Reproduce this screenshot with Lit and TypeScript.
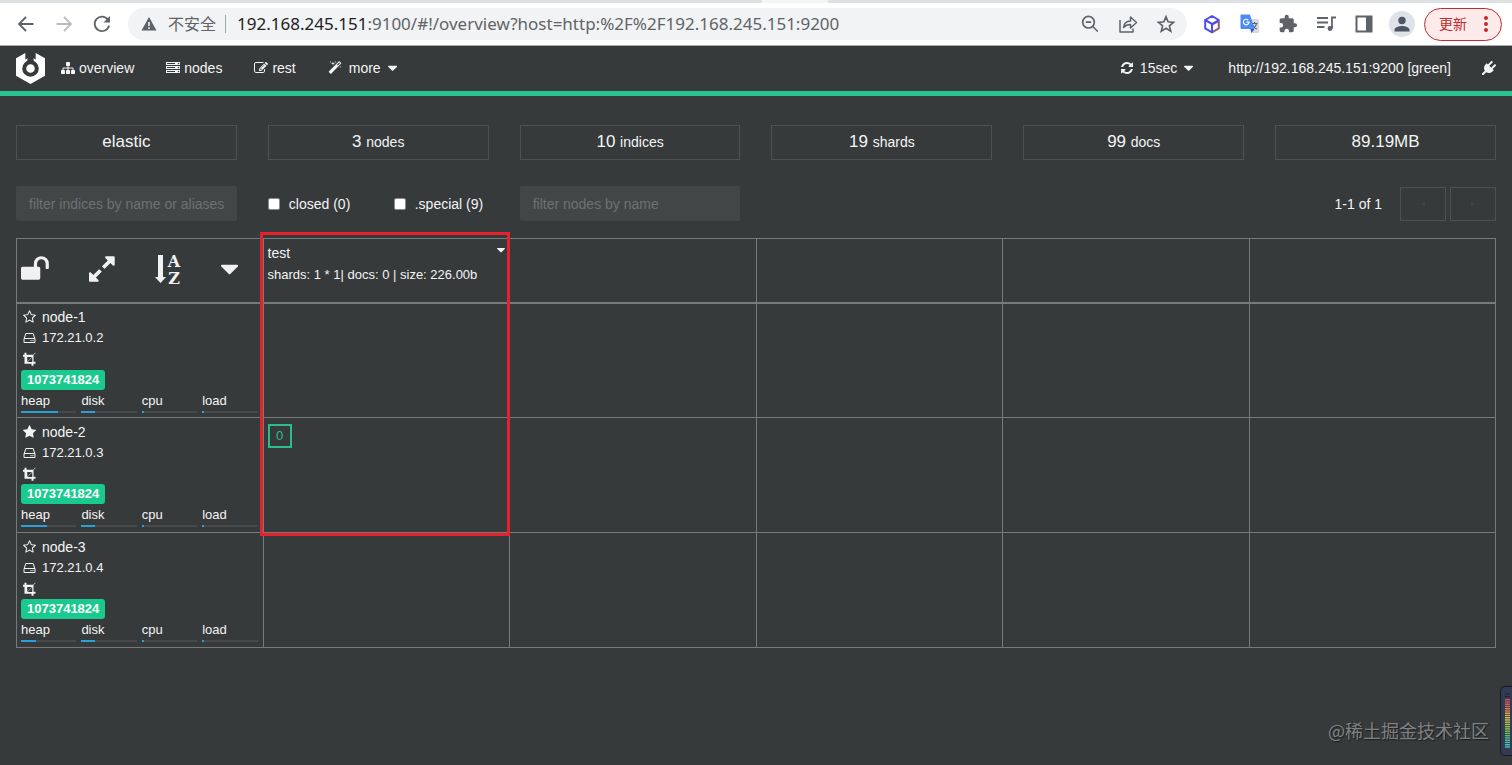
import { LitElement, html, css, svg, nothing } from "lit";
import { customElement, property } from "lit/decorators.js";

interface Glyph {
  box: string;
  d: string;
}

const GLYPHS: Record<string, Glyph> = {
  caret: {
    box: "384 0 1024 1792",
    d: "M1408 704q0 26-19 45l-448 448q-19 19-45 19t-45-19l-448-448q-19-19-19-45t19-45 45-19h896q26 0 45 19t19 45z",
  },
  star: {
    box: "64 0 1664 1792",
    d: "M1728 647q0 22-26 48l-363 354 86 500q1 7 1 20 0 21-10.5 35.5t-30.5 14.5q-19 0-40-12l-449-236-449 236q-22 12-40 12-21 0-31.5-14.5t-10.5-35.5q0-6 2-20l86-500-364-354q-25-27-25-48 0-37 56-46l502-73 225-455q19-41 49-41t49 41l225 455 502 73q56 9 56 46z",
  },
  starOutline: {
    box: "64 0 1664 1792",
    d: "M1201 1004l306-297-422-62-189-382-189 382-422 62 306 297-73 421 378-199 377 199zm527-357q0 22-26 48l-363 354 86 500q1 7 1 20 0 50-41 50-19 0-40-12l-449-236-449 236q-22 12-40 12-21 0-31.5-14.5t-10.5-35.5q0-6 2-20l86-500-364-354q-25-27-25-48 0-37 56-46l502-73 225-455q19-41 49-41t49 41l225 455 502 73q56 9 56 46z",
  },
  sitemap: {
    box: "0 0 1792 1792",
    d: "M1792 1248v320q0 40-28 68t-68 28h-320q-40 0-68-28t-28-68v-320q0-40 28-68t68-28h96v-192h-512v192h96q40 0 68 28t28 68v320q0 40-28 68t-68 28h-320q-40 0-68-28t-28-68v-320q0-40 28-68t68-28h96v-192h-512v192h96q40 0 68 28t28 68v320q0 40-28 68t-68 28h-320q-40 0-68-28t-28-68v-320q0-40 28-68t68-28h96v-192q0-52 38-90t90-38h512v-192h-96q-40 0-68-28t-28-68v-320q0-40 28-68t68-28h320q40 0 68 28t28 68v320q0 40-28 68t-68 28h-96v192h512q52 0 90 38t38 90v192h96q40 0 68 28t28 68z",
  },
  server: {
    box: "0 0 1792 1792",
    d: "M128 1408h1024v-128h-1024v128zm0-512h1024v-128h-1024v128zm1568 448q0-40-28-68t-68-28-68 28-28 68 28 68 68 28 68-28 28-68zm-1568-960h1024v-128h-1024v128zm1568 448q0-40-28-68t-68-28-68 28-28 68 28 68 68 28 68-28 28-68zm0-512q0-40-28-68t-68-28-68 28-28 68 28 68 68 28 68-28 28-68zm96 832v384h-1792v-384h1792zm0-512v384h-1792v-384h1792zm0-512v384h-1792v-384h1792z",
  },
  edit: {
    box: "0 0 1792 1792",
    d: "M888 1184l116-116-152-152-116 116v56h96v96h56zm440-720q-16-16-33 1l-350 350q-17 17-1 33t33-1l350-350q17-17 1-33zm80 594v190q0 119-84.5 203.5t-203.5 84.5h-832q-119 0-203.5-84.5t-84.5-203.5v-832q0-119 84.5-203.5t203.5-84.5h832q63 0 117 25 15 7 18 23 3 17-9 29l-49 49q-14 14-32 8-23-6-45-6h-832q-66 0-113 47t-47 113v832q0 66 47 113t113 47h832q66 0 113-47t47-113v-126q0-13 9-22l64-64q15-15 35-7t20 29zm-96-738l288 288-672 672h-288v-288zm444 132l-92 92-288-288 92-92q28-28 68-28t68 28l152 152q28 28 28 68t-28 68z",
  },
  magic: {
    box: "0 0 1792 1792",
    d: "M1254 581l293-293-107-107-293 293zm447-293q0 27-18 45l-1286 1286q-18 18-45 18t-45-18l-198-198q-18-18-18-45t18-45l1286-1286q18-18 45-18t45 18l198 198q18 18 18 45zm-1351-190l98 30-98 30-30 98-30-98-98-30 98-30 30-98zm350 162l196 60-196 60-60 196-60-196-196-60 196-60 60-196zm930 478l98 30-98 30-30 98-30-98-98-30 98-30 30-98zm-640-640l98 30-98 30-30 98-30-98-98-30 98-30 30-98z",
  },
  refresh: {
    box: "128 0 1536 1792",
    d: "M1639 1056q0 5-1 7-64 268-268 434.5t-478 166.5q-146 0-282.5-55t-243.5-157l-129 129q-19 19-45 19t-45-19-19-45v-448q0-26 19-45t45-19h448q26 0 45 19t19 45-19 45l-137 137q71 66 161 102t187 36q134 0 250-65t186-179q11-17 53-117 8-23 30-23h192q13 0 22.5 9.5t9.5 22.5zm25-800v448q0 26-19 45t-45 19h-448q-26 0-45-19t-19-45 19-45l138-138q-148-137-349-137-134 0-250 65t-186 179q-11 17-53 117-8 23-30 23h-199q-13 0-22.5-9.5t-9.5-22.5v-7q65-268 270-434.5t480-166.5q146 0 284 55.5t245 156.5l130-129q19-19 45-19t45 19 19 45z",
  },
  plug: {
    box: "0 0 1792 1792",
    d: "M1755 453q37 38 37 90.5t-37 90.5l-401 400 150 150-160 160q-163 163-389.5 186.5t-411.5-100.5l-362 362h-181v-181l362-362q-124-185-100.5-411.5t186.5-389.5l160-160 150 150 400-401q38-37 91-37t90 37 37 90.5-37 90.5l-400 401 234 234 401-400q38-37 91-37t90 37z",
  },
  unlock: {
    box: "64 0 1664 1792",
    d: "M1728 576v256q0 26-19 45t-45 19h-64q-26 0-45-19t-19-45v-256q0-106-75-181t-181-75-181 75-75 181v192h96q40 0 68 28t28 68v576q0 40-28 68t-68 28h-960q-40 0-68-28t-28-68v-576q0-40 28-68t68-28h672v-192q0-185 131.5-316.5t316.5-131.5 316.5 131.5 131.5 316.5z",
  },
  expand: {
    box: "128 0 1536 1792",
    d: "M883 1056q0 13-10 23l-332 332 144 144q19 19 19 45t-19 45-45 19h-448q-26 0-45-19t-19-45v-448q0-26 19-45t45-19 45 19l144 144 332-332q10-10 23-10t23 10l114 114q10 10 10 23zm781-864v448q0 26-19 45t-45 19-45-19l-144-144-332 332q-10 10-23 10t-23-10l-114-114q-10-10-10-23t10-23l332-332-144-144q-19-19-19-45t19-45 45-19h448q26 0 45 19t19 45z",
  },
  disk: {
    box: "64 0 1664 1792",
    d: "M1168 1216q0 33-23.5 56.5t-56.5 23.5-56.5-23.5-23.5-56.5 23.5-56.5 56.5-23.5 56.5 23.5 23.5 56.5zm256 0q0 33-23.5 56.5t-56.5 23.5-56.5-23.5-23.5-56.5 23.5-56.5 56.5-23.5 56.5 23.5 23.5 56.5zm112 160v-320q0-13-9.5-22.5t-22.5-9.5h-1216q-13 0-22.5 9.5t-9.5 22.5v320q0 13 9.5 22.5t22.5 9.5h1216q13 0 22.5-9.5t9.5-22.5zm-1230-480h1180l-157-482q-4-13-16-21.5t-26-8.5h-782q-14 0-26 8.5t-16 21.5zm1358 160v320q0 66-47 113t-113 47h-1216q-66 0-113-47t-47-113v-320q0-25 16-75l197-606q17-53 63-86t101-33h782q55 0 101 33t63 86l197 606q16 50 16 75z",
  },
  crop: {
    box: "64 0 1664 1792",
    d: "M646 1280h602v-602zm-38-38l602-602h-602v602zm1056 38v192q0 14-9 23t-23 9h-224v224q0 14-9 23t-23 9h-192q-14 0-23-9t-9-23v-224h-864q-14 0-23-9t-9-23v-864h-224q-14 0-23-9t-9-23v-192q0-14 9-23t23-9h224v-224q0-14 9-23t23-9h192q14 0 23 9t9 23v224h851l246-247q10-9 23-9t23 9q9 10 9 23t-9 23l-247 246v851h224q14 0 23 9t9 23z",
  },
};

const glyph = (name: string, size = "g14") => html`
  <svg class=${size} viewBox=${GLYPHS[name].box} fill="currentColor" aria-hidden="true">
    <path d=${GLYPHS[name].d} />
  </svg>
`;

const glyphSizes = css`
  svg { display: block; flex: none; }
  .g14 { height: 14px; }
  .g16 { height: 16px; }
  .g30 { height: 30px; }
`;

const reset = css`
  *, *::before, *::after { box-sizing: border-box; }
  button, input { font: inherit; color: inherit; margin: 0; }
  button { display: flex; align-items: center; padding: 0; border: 0; background: none; cursor: pointer; }
  a { color: inherit; text-decoration: none; }
`;

@customElement("browser-bar")
export class BrowserBar extends LitElement {
  static styles = [
    reset,
    css`
      :host {
        display: block;
        height: 46px;
        border-bottom: 1px solid #a9abac;
        background: #fff;
        color: #5f6368;
        font-family: "Open Sans", "Noto Sans CJK SC", sans-serif;
      }
      svg { display: block; flex: none; }
      .tabs { display: flex; justify-content: center; height: 3px; padding-left: 78px; background: #dee1e3; }
      .tab { width: 66px; background: #f4f5f6; }
      .bar { display: flex; align-items: center; height: 42px; padding: 0 10px 0 14px; }
      .nav { display: flex; gap: 14px; padding-right: 14px; }
      .omni {
        display: flex;
        flex: 1;
        align-items: center;
        height: 32px;
        padding: 0 9px 0 12px;
        border-radius: 16px;
        background: #f1f3f4;
        font-size: 16px;
      }
      .warn { padding-left: 10px; white-space: nowrap; }
      .sep { width: 1px; height: 18px; margin: 0 11px 0 9px; background: #a4a8ab; }
      .url { flex: 1; font-family: "Noto Sans", sans-serif; font-size: 17px; white-space: nowrap; }
      .host { color: #202124; }
      .inner { display: flex; gap: 14px; }
      .tools { display: flex; align-items: center; gap: 14px; padding-left: 13px; }
      .avatar { overflow: visible; }
      .update {
        gap: 12px;
        height: 33px;
        margin-left: 10px;
        padding: 0 8px 0 14px;
        border: 1px solid #c5292a;
        border-radius: 17px;
        background: #fcebea;
        color: #c5292a;
        font-size: 14px;
      }
    `,
  ];

  render() {
    return html`
      <div class="tabs"><div class="tab"></div></div>
      <div class="bar">
        <div class="nav">
          <button aria-label="Back">
            <svg width="24" height="24" viewBox="0 0 24 24" fill="none" stroke="#5f6368" stroke-width="1.8"><path d="M19.500 12H5M12 5l-7 7 7 7" /></svg>
          </button>
          <button aria-label="Forward">
            <svg width="24" height="24" viewBox="0 0 24 24" fill="none" stroke="#babcbe" stroke-width="1.800"><path d="M4.500 12H19M12 5l7 7-7 7" /></svg>
          </button>
          <button aria-label="Reload">
            <svg width="24" height="24" viewBox="0 0 24 24" fill="none" stroke="#5f6368" stroke-width="1.800">
              <path d="M18.200 8A7.300 7.300 0 1 0 19.100 13.500" />
              <path d="M20 4v6.500h-6.500z" fill="#5f6368" stroke="none" />
            </svg>
          </button>
        </div>
        <div class="omni">
          <svg width="18" height="18" viewBox="0 0 18 18"><path d="M9 2l7.500 13.500h-15z" fill="#5f6368" /><path d="M8.200 7h1.600v4H8.200zM8.200 12.300h1.600v1.600H8.200z" fill="#f1f3f4" /></svg>
          <span class="warn">不安全</span>
          <span class="sep"></span>
          <span class="url"><span class="host">192.168.245.151</span>:9100/#!/overview?host=http:%2F%2F192.168.245.151:9200</span>
          <div class="inner">
            <button aria-label="Zoom">
              <svg width="24" height="24" viewBox="0 0 24 24" fill="none" stroke="#5f6368" stroke-width="1.700"><circle cx="10.500" cy="10.200" r="5.800" /><path d="M14.800 14.500l5 5M7.800 10.200h5.400" /></svg>
            </button>
            <button aria-label="Share">
              <svg width="24" height="24" viewBox="0 0 24 24" fill="none" stroke="#5f6368" stroke-width="1.500" stroke-linejoin="round"><path d="M4 8v12h13v-3.500" /><path d="M7.500 15.500c.5-4.500 3-6.300 7-6.500V5l6 5.500-6 5.500v-3.500c-3 0-5 .8-7 3z" /></svg>
            </button>
            <button aria-label="Bookmark">
              <svg width="24" height="24" viewBox="0 0 24 24" fill="none" stroke="#5f6368" stroke-width="1.700"><path d="M12 4.800l2.100 5 5.400.5-4.100 3.500 1.300 5.300-4.700-2.900-4.700 2.900 1.300-5.300-4.100-3.500 5.400-.5z" /></svg>
            </button>
          </div>
        </div>
        <div class="tools">
          <button aria-label="Cube extension">
            <svg width="24" height="24" viewBox="0 0 24 24" fill="none" stroke-width="2" stroke-linejoin="round">
              <path d="M12 12.500v7.800l6.800-3.900V9.200z" stroke="#8c6468" />
              <path d="M12 12v8.300l-6.800-3.900V8z" stroke="#4a4df0" />
              <path d="M5.200 8L12 4l6.800 4L12 12z" stroke="#4a4df0" />
            </svg>
          </button>
          <button aria-label="Translate">
            <svg width="24" height="24" viewBox="0 0 24 24">
              <path d="M10 7h10a1 1 0 0 1 1 1v12a1 1 0 0 1-1 1h-7z" fill="#d6dade" />
              <path d="M13.500 11.500h6M16.500 10v1.500M18.500 11.500c-.5 2.500-2 4.500-4 5.500M14.800 13c.6 1.600 2 3.200 4 4" fill="none" stroke="#5f6368" stroke-width="1.100" />
              <path d="M3.500 2.500h8.500l4.500 14.500h-13a1 1 0 0 1-1-1v-12.500a1 1 0 0 1 1-1z" fill="#4c8bf5" />
              <path d="M12.500 17h4l-3 4z" fill="#2a56c6" />
              <path d="M10.300 8.200A2.800 2.800 0 1 0 11 10.200H8.400" fill="none" stroke="#fff" stroke-width="1.200" />
            </svg>
          </button>
          <button aria-label="Extensions">
            <svg width="24" height="24" viewBox="0 0 24 24" fill="#5f6368"><path transform="translate(2 2) scale(.83)" d="M20.500 11H19V7c0-1.100-.9-2-2-2h-4V3.500a2.500 2.500 0 0 0-5 0V5H4c-1.100 0-2 .9-2 2v3.800h1.500a2.700 2.700 0 0 1 0 5.400H2V20c0 1.100.9 2 2 2h3.800v-1.500a2.700 2.700 0 0 1 5.400 0V22H17c1.100 0 2-.9 2-2v-4h1.500a2.500 2.500 0 0 0 0-5z" /></svg>
          </button>
          <button aria-label="Media">
            <svg width="24" height="24" viewBox="0 0 24 24" fill="none" stroke="#5f6368" stroke-width="1.800"><path d="M3 6h11M3 10.500h11M3 15h7.500M22 5.500h-4v11" /><circle cx="16" cy="16.500" r="2.100" fill="#5f6368" stroke="none" /><circle cx="16" cy="16.500" r="1.500" /></svg>
          </button>
          <button aria-label="Side panel">
            <svg width="24" height="24" viewBox="0 0 24 24"><path d="M4.500 4.500h15v15h-15z" fill="none" stroke="#5f6368" stroke-width="2" /><path d="M14 4h6v16h-6z" fill="#5f6368" /></svg>
          </button>
          <button aria-label="Profile">
            <svg class="avatar" width="24" height="24" viewBox="1 1 24 24"><circle cx="13" cy="13" r="13" fill="#dfe2e8" /><circle cx="13" cy="9.500" r="3.700" fill="#4d5563" /><path d="M5.500 20.500v-1.500c0-2.700 4.500-4 7.500-4s7.500 1.300 7.500 4v1.500z" fill="#4d5563" /></svg>
          </button>
        </div>
        <button class="update">
          更新
          <svg width="14" height="16" viewBox="0 0 14 16" fill="#c5292a"><circle cx="7" cy="2" r="2" /><circle cx="7" cy="8" r="2" /><circle cx="7" cy="14" r="2" /></svg>
        </button>
      </div>
    `;
  }
}

@customElement("cluster-nav")
export class ClusterNav extends LitElement {
  static styles = [
    reset,
    glyphSizes,
    css`
      :host { display: block; border-bottom: 5px solid #28c48f; }
      nav { display: flex; align-items: center; height: 45px; padding: 0 16px 2px 15px; }
      .logo { margin-right: 15px; }
      .links { display: flex; flex: 1; gap: 32px; }
      .item { display: flex; align-items: center; gap: 4px; }
      .wide { gap: 7px; }
      .right { display: flex; align-items: center; }
      .address { margin: 0 31px 0 35px; }
    `,
  ];

  render() {
    return html`
      <nav>
        <a class="logo" href="#overview" aria-label="Home">
          <svg width="31" height="32" viewBox="0 0 31 32">
            <path d="M10.300 1v6.500L13 6h5l2.700 1.500V1L30 6.200v17.600L15.500 32 1 23.800V6.200z" fill="#fff" />
            <path d="M12.400 0h6.200v9h-6.200z" fill="#363a3b" />
            <circle cx="15.500" cy="16.500" r="6.300" fill="#fff" stroke="#363a3b" stroke-width="4" />
          </svg>
        </a>
        <div class="links">
          <a class="item" href="#overview">${glyph("sitemap")}overview</a>
          <a class="item" href="#nodes">${glyph("server")}nodes</a>
          <a class="item" href="#rest">${glyph("edit")}rest</a>
          <button class="item wide">${glyph("magic")}more${glyph("caret", "g16")}</button>
        </div>
        <div class="right">
          <button class="item wide">${glyph("refresh")}15sec${glyph("caret", "g16")}</button>
          <span class="address">http://192.168.245.151:9200 [green]</span>
          <button aria-label="Disconnect">${glyph("plug")}</button>
        </div>
      </nav>
    `;
  }
}

@customElement("cluster-stats")
export class ClusterStats extends LitElement {
  static styles = [
    reset,
    css`
      :host { display: grid; grid-template-columns: repeat(6, minmax(0, 1fr)); gap: 31px; }
      .stat { height: 35px; border: 1px solid #4d5152; font-size: 17px; line-height: 32px; text-align: center; }
      .unit { font-size: 14px; }
    `,
  ];

  render() {
    const stats = [
      ["elastic", ""],
      ["3", "nodes"],
      ["10", "indices"],
      ["19", "shards"],
      ["99", "docs"],
      ["89.19MB", ""],
    ];
    return stats.map(
      ([value, unit]) => html`
        <div class="stat">${value}${unit ? html` <span class="unit">${unit}</span>` : nothing}</div>
      `
    );
  }
}

@customElement("index-filters")
export class IndexFilters extends LitElement {
  static styles = [
    reset,
    css`
      :host { display: grid; grid-template-columns: repeat(6, minmax(0, 1fr)); gap: 31px; align-items: center; }
      .text {
        width: 100%;
        height: 35px;
        padding: 0 13px;
        border: 0;
        border-radius: 2px;
        background: #434647;
      }
      .text::placeholder { color: #6e7172; opacity: 1; }
      .checks { display: grid; grid-template-columns: 1fr 1fr; column-gap: 31px; }
      .check { display: flex; align-items: center; gap: 9px; white-space: nowrap; }
      .box {
        appearance: none;
        width: 12px;
        height: 12px;
        border: 1px solid #8b8d8e;
        border-radius: 2px;
        background: #fff;
      }
      .pager { display: flex; grid-column: 4 / 7; justify-content: flex-end; align-items: center; gap: 4px; }
      .count { margin-right: 14px; }
      .page { justify-content: center; width: 46px; height: 34px; border: 1px solid #4d5152; color: #404445; }
    `,
  ];

  render() {
    return html`
      <input class="text" type="text" placeholder="filter indices by name or aliases" aria-label="filter indices by name or aliases" />
      <div class="checks">
        <label class="check"><input class="box" type="checkbox" />closed (0)</label>
        <label class="check"><input class="box" type="checkbox" />.special (9)</label>
      </div>
      <input class="text" type="text" placeholder="filter nodes by name" aria-label="filter nodes by name" />
      <div class="pager">
        <span class="count">1-1 of 1</span>
        <button class="page" aria-label="Previous page" disabled>
          <svg width="6" height="6" viewBox="0 0 6 6" fill="currentColor"><path d="M5 0v6L1 3z" /></svg>
        </button>
        <button class="page" aria-label="Next page" disabled>
          <svg width="6" height="6" viewBox="0 0 6 6" fill="currentColor"><path d="M1 0v6l4-3z" /></svg>
        </button>
      </div>
    `;
  }
}

interface NodeInfo {
  name: string;
  ip: string;
  master: boolean;
  usage: number[];
  shards: string[];
}

@customElement("node-card")
export class NodeCard extends LitElement {
  static styles = [
    reset,
    glyphSizes,
    css`
      :host { display: block; padding: 3px 5px 4px 4px; }
      .line { display: flex; align-items: center; gap: 6px; height: 21px; padding-left: 2px; }
      .name { font-size: 14px; }
      .ip { font-size: 13px; }
      .tag {
        display: inline-block;
        height: 20px;
        padding: 0 6px;
        border-radius: 3px;
        background: #1ac98e;
        color: #fff;
        font-size: 13px;
        font-weight: 700;
        line-height: 20px;
        vertical-align: top;
      }
      .meters { display: grid; grid-template-columns: repeat(4, 1fr); gap: 5px; font-size: 13px; line-height: 21px; }
      .track { height: 2px; background: #47494b; }
      .fill { height: 2px; background: #2b9fd8; }
    `,
  ];

  @property({ attribute: false }) node!: NodeInfo;

  render() {
    const n = this.node;
    return html`
      <div class="line name">${glyph(n.master ? "star" : "starOutline")}${n.name}</div>
      <div class="line ip">${glyph("disk")}${n.ip}</div>
      <div class="line">${glyph("crop")}</div>
      <span class="tag">1073741824</span>
      <div class="meters">
        ${["heap", "disk", "cpu", "load"].map(
          (label, i) => html`
            <div>
              ${label}
              <div class="track"><div class="fill" style="width: ${n.usage[i]}%"></div></div>
            </div>
          `
        )}
      </div>
    `;
  }
}

@customElement("shard-table")
export class ShardTable extends LitElement {
  static styles = [
    reset,
    glyphSizes,
    css`
      :host { display: block; position: relative; }
      table { width: 100%; border-collapse: collapse; table-layout: fixed; }
      th, td { padding: 0; border: 1px solid #77797a; font-weight: 400; text-align: left; vertical-align: top; }
      th { height: 64px; border-bottom-width: 2px; }
      td { height: 115px; }
      .actions { display: flex; align-items: center; gap: 40px; height: 60px; padding-left: 4px; color: #f1f1f4; }
      .sort { overflow: visible; }
      .letters { font: 700 16px "DejaVu Serif", serif; }
      .index { padding: 4px; line-height: 21px; }
      .title { display: flex; justify-content: space-between; font-size: 14px; }
      .detail { font-size: 13px; white-space: nowrap; }
      .menu { align-items: flex-start; }
      .shard {
        display: block;
        width: 24px;
        height: 24px;
        margin: 6px 4px;
        border: 2px solid #2bbd8c;
        color: #2bbd8c;
        font-size: 13px;
        text-align: center;
      }
      .highlight {
        position: absolute;
        top: -6px;
        bottom: 112px;
        left: calc(100% / 6 - 3px);
        width: calc(100% / 6 + 4px);
        border: 3px solid #e5222b;
        pointer-events: none;
      }
    `,
  ];

  nodes: NodeInfo[] = [
    { name: "node-1", ip: "172.21.0.2", master: false, usage: [67, 24, 4, 4], shards: [] },
    { name: "node-2", ip: "172.21.0.3", master: true, usage: [47, 24, 4, 4], shards: ["0"] },
    { name: "node-3", ip: "172.21.0.4", master: false, usage: [27, 24, 4, 4], shards: [] },
  ];

  render() {
    const spare = [0, 1, 2, 3];
    return html`
      <table>
        <thead>
          <tr>
            <th>
              <div class="actions">
                <button aria-label="Unlock">${glyph("unlock", "g30")}</button>
                <button aria-label="Expand">${glyph("expand", "g30")}</button>
                <button aria-label="Sort by name">
                  <svg class="sort" width="26" height="30" viewBox="0 0 26 30" fill="currentColor">
                    <path d="M3 1h5v22h3l-5.500 6L0 23h3z" />
                    <text class="letters" x="19" y="13" text-anchor="middle">A</text>
                    <text class="letters" x="19" y="30" text-anchor="middle">Z</text>
                  </svg>
                </button>
                <button aria-label="More">${glyph("caret", "g30")}</button>
              </div>
            </th>
            <th>
              <div class="index">
                <div class="title">
                  test
                  <button class="menu" aria-label="Index menu">${glyph("caret")}</button>
                </div>
                <div class="detail">shards: 1 * 1| docs: 0 | size: 226.00b</div>
              </div>
            </th>
            ${spare.map(() => html`<th></th>`)}
          </tr>
        </thead>
        <tbody>
          ${this.nodes.map(
            (n) => html`
              <tr>
                <td><node-card .node=${n}></node-card></td>
                <td>${n.shards.map((s) => html`<button class="shard">${s}</button>`)}</td>
                ${spare.map(() => html`<td></td>`)}
              </tr>
            `
          )}
        </tbody>
      </table>
      <div class="highlight"></div>
    `;
  }
}

@customElement("app-root")
export class AppRoot extends LitElement {
  static styles = [
    reset,
    css`
      :host {
        display: block;
        position: relative;
        min-height: 100vh;
        background: #363a3b;
        color: #f4f4f4;
        font: 14px/20px "Liberation Sans", "Noto Sans CJK SC", sans-serif;
      }
      main { display: flex; flex-direction: column; padding: 29px 16px; }
      index-filters { margin: 26px 0 17px; }
      .credit {
        position: absolute;
        right: 23px;
        bottom: 23px;
        color: #808384;
        font: 18px/24px "Noto Sans CJK SC", sans-serif;
        text-shadow: 1px 1px 1px #1b1d1e;
      }
      .gauge { position: absolute; right: 0; bottom: 9px; display: block; }
    `,
  ];

  render() {
    const hues = ["#d5525a", "#d96a4e", "#dd8a45", "#dcb43f", "#d3c93c", "#b4c93f", "#93c944", "#6cc552", "#4fc478", "#45c9a4", "#42c7b9"];
    return html`
      <browser-bar></browser-bar>
      <cluster-nav></cluster-nav>
      <main>
        <cluster-stats></cluster-stats>
        <index-filters></index-filters>
        <shard-table></shard-table>
      </main>
      <div class="credit">@稀土掘金技术社区</div>
      <svg class="gauge" width="12" height="70" viewBox="0 0 12 70" aria-hidden="true">
        <rect x=".5" y=".5" width="16" height="69" rx="4" fill="#343a52" stroke="#15182a" />
        <path d="M5 8h5M5 10.500h5" stroke="#20243a" />
        ${Array.from({ length: 22 }, (_, i) => svg`<rect x="5" y=${13 + i * 2.25} width="5" height="1.400" fill=${hues[i >> 1]} />`)}
      </svg>
    `;
  }
}
